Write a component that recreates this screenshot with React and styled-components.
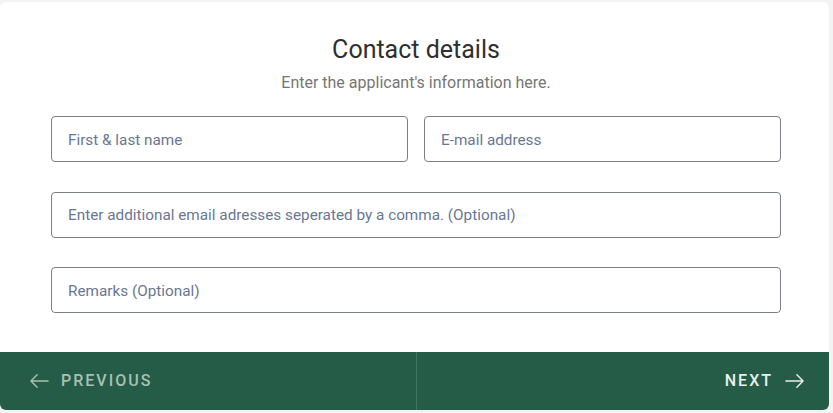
import React from "react";
//Styling
import styled, { createGlobalStyle } from "styled-components";

const GlobalStyle = createGlobalStyle`
  html, body {
    margin: 0;
    padding: 0;
    background: #f3f3f3;
    font-family: Roboto, "Liberation Sans", Arial, sans-serif;
  }
  * {
    box-sizing: border-box;
  }
`;

//Long thin arrow, wider than it is tall
const Arrow = ({ dir }) => (
  <ArrowSvg viewBox="0 0 20 14" flip={dir === "left"}>
    <path d="M1 7h18M12.5 0.5L19 7l-6.5 6.5" />
  </ArrowSvg>
);

function App() {
  return (
    <>
      <GlobalStyle />
      <Page>
        <Card>
          <Body>
            <Title>Contact details</Title>
            <Subtitle>Enter the applicant's information here.</Subtitle>
            <Fields>
              <Row columns={2}>
                <Input placeholder="First & last name" />
                <Input placeholder="E-mail address" />
              </Row>
              <Row columns={1}>
                <Input placeholder="Enter additional email adresses seperated by a comma. (Optional)" />
              </Row>
              <Row columns={1}>
                <Input placeholder="Remarks (Optional)" />
              </Row>
            </Fields>
          </Body>
          <Footer>
            <NavButton align="left" muted>
              <Arrow dir="left" />
              <span>Previous</span>
            </NavButton>
            <NavButton align="right">
              <span>Next</span>
              <Arrow dir="right" />
            </NavButton>
          </Footer>
        </Card>
      </Page>
    </>
  );
}

const Page = styled.div`
  padding-top: 2px;
  height: 413px;
`;

const Card = styled.div`
  width: 829px;
  height: 408px;
  background: #ffffff;
  border-radius: 6px;
  overflow: hidden;
  display: flex;
  flex-direction: column;
`;

const Body = styled.div`
  flex: 1;
  padding: 32px 48px 0 51px;
  display: flex;
  flex-direction: column;
  align-items: center;
`;

const Title = styled.h2`
  margin: 0;
  font-size: 25px;
  font-weight: 400;
  line-height: 32px;
  color: #2f2f2f;
`;

const Subtitle = styled.p`
  margin: 5px 0 0;
  font-size: 16px;
  line-height: 24px;
  color: #767676;
`;

const Fields = styled.div`
  width: 100%;
  margin-top: 21px;
  display: flex;
  flex-direction: column;
  gap: 29.5px;
`;

const Row = styled.div`
  display: grid;
  grid-template-columns: repeat(${(p) => p.columns}, 1fr);
  column-gap: 16px;
`;

const Input = styled.input`
  height: 46px;
  width: 100%;
  padding: 1px 16px 0;
  border: 1px solid #7b7f86;
  border-radius: 4px;
  font-family: Roboto, "Liberation Sans", Arial, sans-serif;
  font-size: 15.3px;
  color: #333;
  outline: none;
  &::placeholder {
    color: #6a7794;
  }
`;

const Footer = styled.div`
  height: 58px;
  background: #255c47;
  display: grid;
  grid-template-columns: 416px 1fr;
`;

const NavButton = styled.button`
  display: flex;
  align-items: center;
  justify-content: ${(p) => (p.align === "left" ? "flex-start" : "flex-end")};
  gap: 12px;
  padding: ${(p) => (p.align === "left" ? "0 0 0 30px" : "0 25px 0 0")};
  background: transparent;
  border: none;
  border-left: ${(p) => (p.align === "right" ? "1px solid #3b7562" : "none")};
  color: ${(p) => (p.muted ? "#a8c0b3" : "#e9f0ec")};
  font-family: Roboto, "Liberation Sans", Arial, sans-serif;
  font-size: 16px;
  font-weight: 500;
  letter-spacing: 2px;
  text-transform: uppercase;
  cursor: pointer;
  span {
    line-height: 1;
    margin-right: ${(p) => (p.align === "left" ? "-2px" : "0")};
  }
`;

const ArrowSvg = styled.svg`
  width: 19px;
  height: 14px;
  fill: none;
  stroke: currentColor;
  stroke-width: 1.5;
  stroke-linecap: round;
  stroke-linejoin: round;
  transform: ${(p) => (p.flip ? "scaleX(-1)" : "none")};
`;

export default App;
